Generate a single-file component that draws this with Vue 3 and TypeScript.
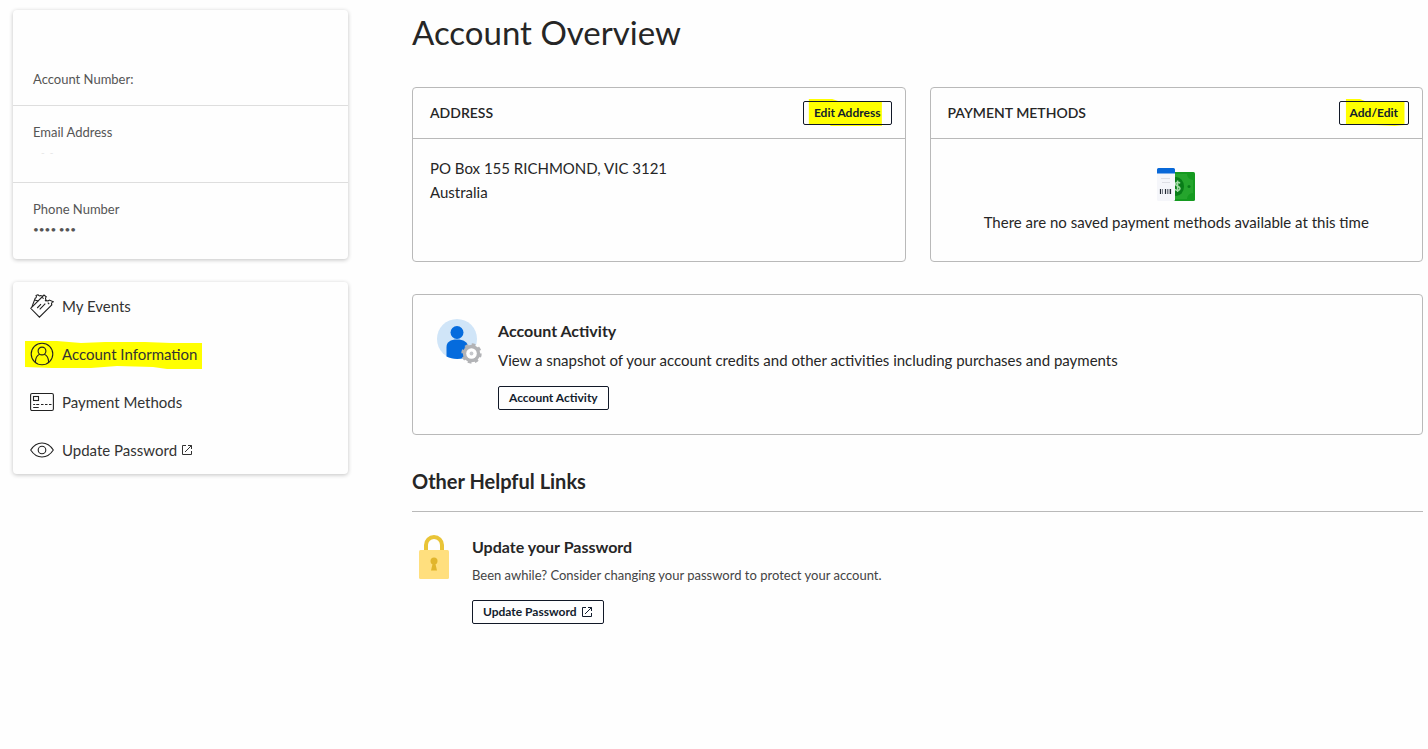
<script setup lang="ts">
import { ref } from 'vue'

type IconName = 'tickets' | 'person' | 'card' | 'eye'

interface NavItem {
  label: string
  icon: IconName
  external?: boolean
}

const navItems: NavItem[] = [
  { label: 'My Events', icon: 'tickets' },
  { label: 'Account Information', icon: 'person' },
  { label: 'Payment Methods', icon: 'card' },
  { label: 'Update Password', icon: 'eye', external: true },
]

const current = ref('Account Information')
</script>

<template>
  <div class="page">
    <aside class="sidebar">
      <section class="card profile">
        <div class="profile-row account">
          <span class="label">Account Number:</span>
        </div>
        <div class="profile-row">
          <span class="label">Email Address</span>
          <span class="masked faint">-&nbsp; -</span>
        </div>
        <div class="profile-row phone">
          <span class="label">Phone Number</span>
          <span class="masked">•••• •••</span>
        </div>
      </section>

      <nav class="card menu">
        <a
          v-for="item in navItems"
          :key="item.label"
          href="#"
          class="menu-link"
          @click.prevent="current = item.label"
        >
          <svg v-if="item.label === current" class="marker" viewBox="0 0 177 28" preserveAspectRatio="none" aria-hidden="true">
            <path d="M0 0H32L56 2 80 1H120L146 2H177V28H142L128 26 92 25 66 27H27L0 26Z" />
          </svg>
          <svg v-if="item.icon === 'tickets'" class="icon" viewBox="0 0 24 24" aria-hidden="true">
            <path d="M.7 14.300 14 1l2.200 1.800a2.200 2.200 0 0 0 3.200 3.300l3.900 1.700a2 2 0 0 0-1.500 3L9.400 23.200Z" />
            <path d="m1.900 12.900 3.300-8.700a1.800 1.800 0 0 0 .9-2.700L8 .8a1.800 1.800 0 0 0 2.700.7l2.200.7M4.600 6l3.700 1" />
            <path d="m7.200 14 3.800-3.800M9.700 15.300l5.600-5.600" />
            <path d="m12.200 3.300 1.400 1.400M15 6l1.400 1.400M17.800 8.700l1.400 1.400" />
          </svg>
          <svg v-else-if="item.icon === 'person'" class="icon" viewBox="0 0 24 24" aria-hidden="true">
            <circle cx="12" cy="12" r="10.8" />
            <circle cx="12" cy="9" r="3.9" />
            <path d="M5.3 20.3c.2-4.2 1.7-7 4.4-8M18.7 20.3c-.2-4.2-1.7-7-4.4-8" />
          </svg>
          <svg v-else-if="item.icon === 'card'" class="icon" viewBox="0 0 24 24" aria-hidden="true">
            <rect x=".6" y="3.5" width="22.8" height="17" rx="1.5" />
            <rect x="3.5" y="6.5" width="5" height="4" />
            <path d="M3.2 14.5h2M6.2 14.5h3M11 14.5h2.5M15 14.5h2.5M19 14.5h2.5M3.2 17.5h5.5" />
          </svg>
          <svg v-else class="icon" viewBox="0 0 24 24" aria-hidden="true">
            <path d="M.7 12C3.7 7.3 7.4 5 12 5s8.300 2.300 11.300 7C20.300 16.700 16.600 19 12 19S3.700 16.700.7 12Z" />
            <circle cx="12" cy="12" r="3.800" />
          </svg>
          <span class="menu-label">{{ item.label }}</span>
          <svg v-if="item.external" class="external" viewBox="0 0 12 12" aria-hidden="true">
            <path d="M5 1.500H1.500v9h9V7M4 8l6.500-6.500M7 1.500h3.500V5" />
          </svg>
        </a>
      </nav>
    </aside>

    <main class="content">
      <h1>Account Overview</h1>

      <div class="panels">
        <section class="panel">
          <header class="panel-head">
            <h2>ADDRESS</h2>
            <button type="button" class="btn">
              <svg class="marker" viewBox="0 0 91 30" preserveAspectRatio="none" aria-hidden="true">
                <path d="M6 1H30L36 3H81V28H28V26H6Z" />
              </svg>
              <span>Edit Address</span>
            </button>
          </header>
          <address class="panel-body">PO Box 155 RICHMOND, VIC 3121<br />Australia</address>
        </section>

        <section class="panel">
          <header class="panel-head">
            <h2>PAYMENT METHODS</h2>
            <button type="button" class="btn">
              <svg class="marker" viewBox="0 0 71 30" preserveAspectRatio="none" aria-hidden="true">
                <path d="M7 1H21L26 3H66V27L56 28 36 27 30 26H7Z" />
              </svg>
              <span>Add/Edit</span>
            </button>
          </header>
          <div class="panel-body empty">
            <svg class="money" viewBox="0 0 38 34" aria-hidden="true">
              <rect x="9" y="4" width="29" height="29" rx="1.500" fill="#159a20" />
              <path d="M18 6h12a6 6 0 0 0 6 6v13a6 6 0 0 0-6 6H18Z" fill="#25a52d" />
              <ellipse cx="19" cy="18.500" rx="8" ry="9.500" fill="#087d18" />
              <path d="M23 15.300c-1-1.600-4.500-1.600-4.500.7 0 2.700 4.500 1.700 4.500 4.500 0 2.300-3.500 2.500-5 .8M20.600 12.500v11.500" fill="none" stroke="#a4dba7" stroke-width="1.500" />
              <circle cx="32" cy="18.500" r="1.500" fill="#087d18" />
              <rect x="0" y="0" width="18" height="33" rx="1.500" fill="#f5f6fa" />
              <path d="M1.500 0h15A1.500 1.500 0 0 1 18 1.500V5.500H0v-4A1.500 1.500 0 0 1 1.500 0Z" fill="#0868d8" />
              <path d="M4 10.500h9M5 14.500h8" stroke="#dedfe5" />
              <path d="M3.500 21v5M8.500 21v5M13.500 21v5" stroke="#242a35" stroke-width="1.200" />
              <path d="M5.500 21v5M10.500 21v5M12 21v5" stroke="#777d86" />
            </svg>
            <p>There are no saved payment methods available at this time</p>
          </div>
        </section>
      </div>

      <section class="activity">
        <svg class="avatar" viewBox="0 0 46 46" aria-hidden="true">
          <circle cx="20" cy="20" r="20" fill="#d0e5f8" />
          <circle cx="20" cy="13.500" r="6.500" fill="#056bdd" />
          <path d="M9.500 37.500V28c0-5 4-7.500 10.500-7.500S31 23 31 28v9.500c-6 3.300-15.500 3.300-21.500 0Z" fill="#056bdd" />
          <circle cx="34.500" cy="34.500" r="8.700" fill="#b2b3b6" />
          <circle cx="34.500" cy="34.500" r="8.800" fill="none" stroke="#b2b3b6" stroke-width="2.800" stroke-dasharray="3.500 3.411" />
          <circle cx="34.500" cy="34.500" r="5.300" fill="#fff" />
          <circle cx="34.500" cy="34.500" r="1.900" fill="#c6c8cc" />
        </svg>
        <div>
          <h3>Account Activity</h3>
          <p class="activity-text">View a snapshot of your account credits and other activities including purchases and payments</p>
          <button type="button" class="btn">Account Activity</button>
        </div>
      </section>

      <h2 class="links-title">Other Helpful Links</h2>
      <section class="helpful">
        <svg class="lock" viewBox="0 0 30 44" aria-hidden="true">
          <path d="M7 17V10a8 8 0 0 1 16 0v7" fill="none" stroke="#e9c437" stroke-width="4" />
          <rect y="15" width="30" height="29" rx="1.500" fill="#ffdf7e" />
          <circle cx="15" cy="26" r="3.500" fill="#e1b52c" />
          <path d="m14 27-2 8.500h6L16 27Z" fill="#e1b52c" />
        </svg>
        <div>
          <h3>Update your Password</h3>
          <p class="helpful-text">Been awhile? Consider changing your password to protect your account.</p>
          <button type="button" class="btn">
            <span>Update Password</span>
            <svg class="external" viewBox="0 0 12 12" aria-hidden="true">
              <path d="M5 1.500H1.500v9h9V7M4 8l6.500-6.500M7 1.500h3.500V5" />
            </svg>
          </button>
        </div>
      </section>
    </main>
  </div>
</template>

<style>
body {
  margin: 0;
  background: #fefefe;
}
</style>

<style scoped>
.page {
  display: grid;
  grid-template-columns: 1fr 3fr;
  align-items: start;
  column-gap: 63px;
  padding: 10px 5px 24px 12px;
  color: #262626;
  font-family: Lato, "Open Sans", sans-serif;
  font-size: 15px;
  line-height: 24px;
}

h1,
h2,
h3,
p {
  margin: 0;
}

.sidebar {
  display: grid;
  gap: 23px;
  padding: 0 1px;
}

.card {
  border-radius: 4px;
  background: #fefefe;
  box-shadow: 0 1px 4px rgba(0, 0, 0, 0.24);
}

.profile-row {
  display: flex;
  flex-direction: column;
  box-sizing: border-box;
  min-height: 77px;
  padding: 16px 20px;
  border-top: 1px solid #dedede;
  line-height: 20px;
}

.profile-row.account {
  justify-content: flex-end;
  min-height: 95px;
  border-top: 0;
}

.label {
  color: #555;
  font-size: 13px;
}

.masked {
  color: #555;
  font-size: 10px;
}

.faint {
  padding-left: 8px;
  color: #e4e4e4;
}

.menu-link {
  position: relative;
  display: flex;
  align-items: center;
  height: 48px;
  padding: 0 17px;
  color: #333;
  text-decoration: none;
}

.icon {
  position: relative;
  width: 24px;
  height: 24px;
  margin-right: 8px;
  fill: none;
  stroke: #222;
  stroke-width: 1.1;
}

.menu-label {
  position: relative;
}

.external {
  width: 12px;
  height: 12px;
  margin-left: 4px;
  fill: none;
  stroke: currentColor;
}

.marker {
  position: absolute;
  fill: #ff0;
}

.menu-link .marker {
  top: 11px;
  left: 12px;
  width: 177px;
  height: 28px;
}

h1 {
  font-size: 33px;
  font-weight: 400;
  line-height: 44px;
}

.panels {
  display: grid;
  grid-template-columns: 1fr 1fr;
  gap: 24px;
  margin-top: 33px;
}

.panel,
.activity {
  border: 1px solid #b9b9b9;
  border-radius: 4px;
}

.panel-head {
  display: flex;
  align-items: center;
  justify-content: space-between;
  height: 50px;
  padding: 0 13px 0 17px;
  border-bottom: 1px solid #b9b9b9;
}

.panel-head h2 {
  font-size: 14px;
  font-weight: 600;
}

.panel-body {
  box-sizing: border-box;
  min-height: 122px;
  padding: 17px;
  font-size: 15px;
  font-style: normal;
}

.empty {
  display: flex;
  flex-direction: column;
  align-items: center;
  padding-top: 29px;
}

.money {
  width: 38px;
  height: 34px;
  margin-bottom: 8px;
}

.btn {
  position: relative;
  display: inline-flex;
  align-items: center;
  height: 24px;
  padding: 0 10px;
  border: 1px solid #111827;
  border-radius: 2px;
  background: transparent;
  color: #121c2d;
  font: 700 12px/22px Lato, "Open Sans", sans-serif;
  white-space: nowrap;
  cursor: pointer;
}

.btn span {
  position: relative;
}

.btn .marker {
  z-index: -1;
  top: -4px;
  left: -1px;
  width: calc(100% + 2px);
  height: 30px;
}

.activity {
  display: flex;
  gap: 15px;
  margin-top: 32px;
  padding: 24px;
}

.avatar {
  flex: none;
  width: 46px;
  height: 46px;
}

.activity .btn,
.helpful .btn {
  display: flex;
}

h3 {
  font-size: 16px;
  font-weight: 700;
}

.activity-text {
  margin: 5px 0 14px;
}

.links-title {
  margin-top: 31px;
  padding-bottom: 14px;
  border-bottom: 1px solid #b9b9b9;
  font-size: 20px;
  font-weight: 700;
  line-height: 31px;
}

.helpful {
  display: flex;
  gap: 23px;
  padding: 23px 7px;
}

.lock {
  flex: none;
  width: 30px;
  height: 44px;
}

.helpful-text {
  margin: 4px 0 13px;
  color: #444;
  font-size: 13px;
}
</style>
